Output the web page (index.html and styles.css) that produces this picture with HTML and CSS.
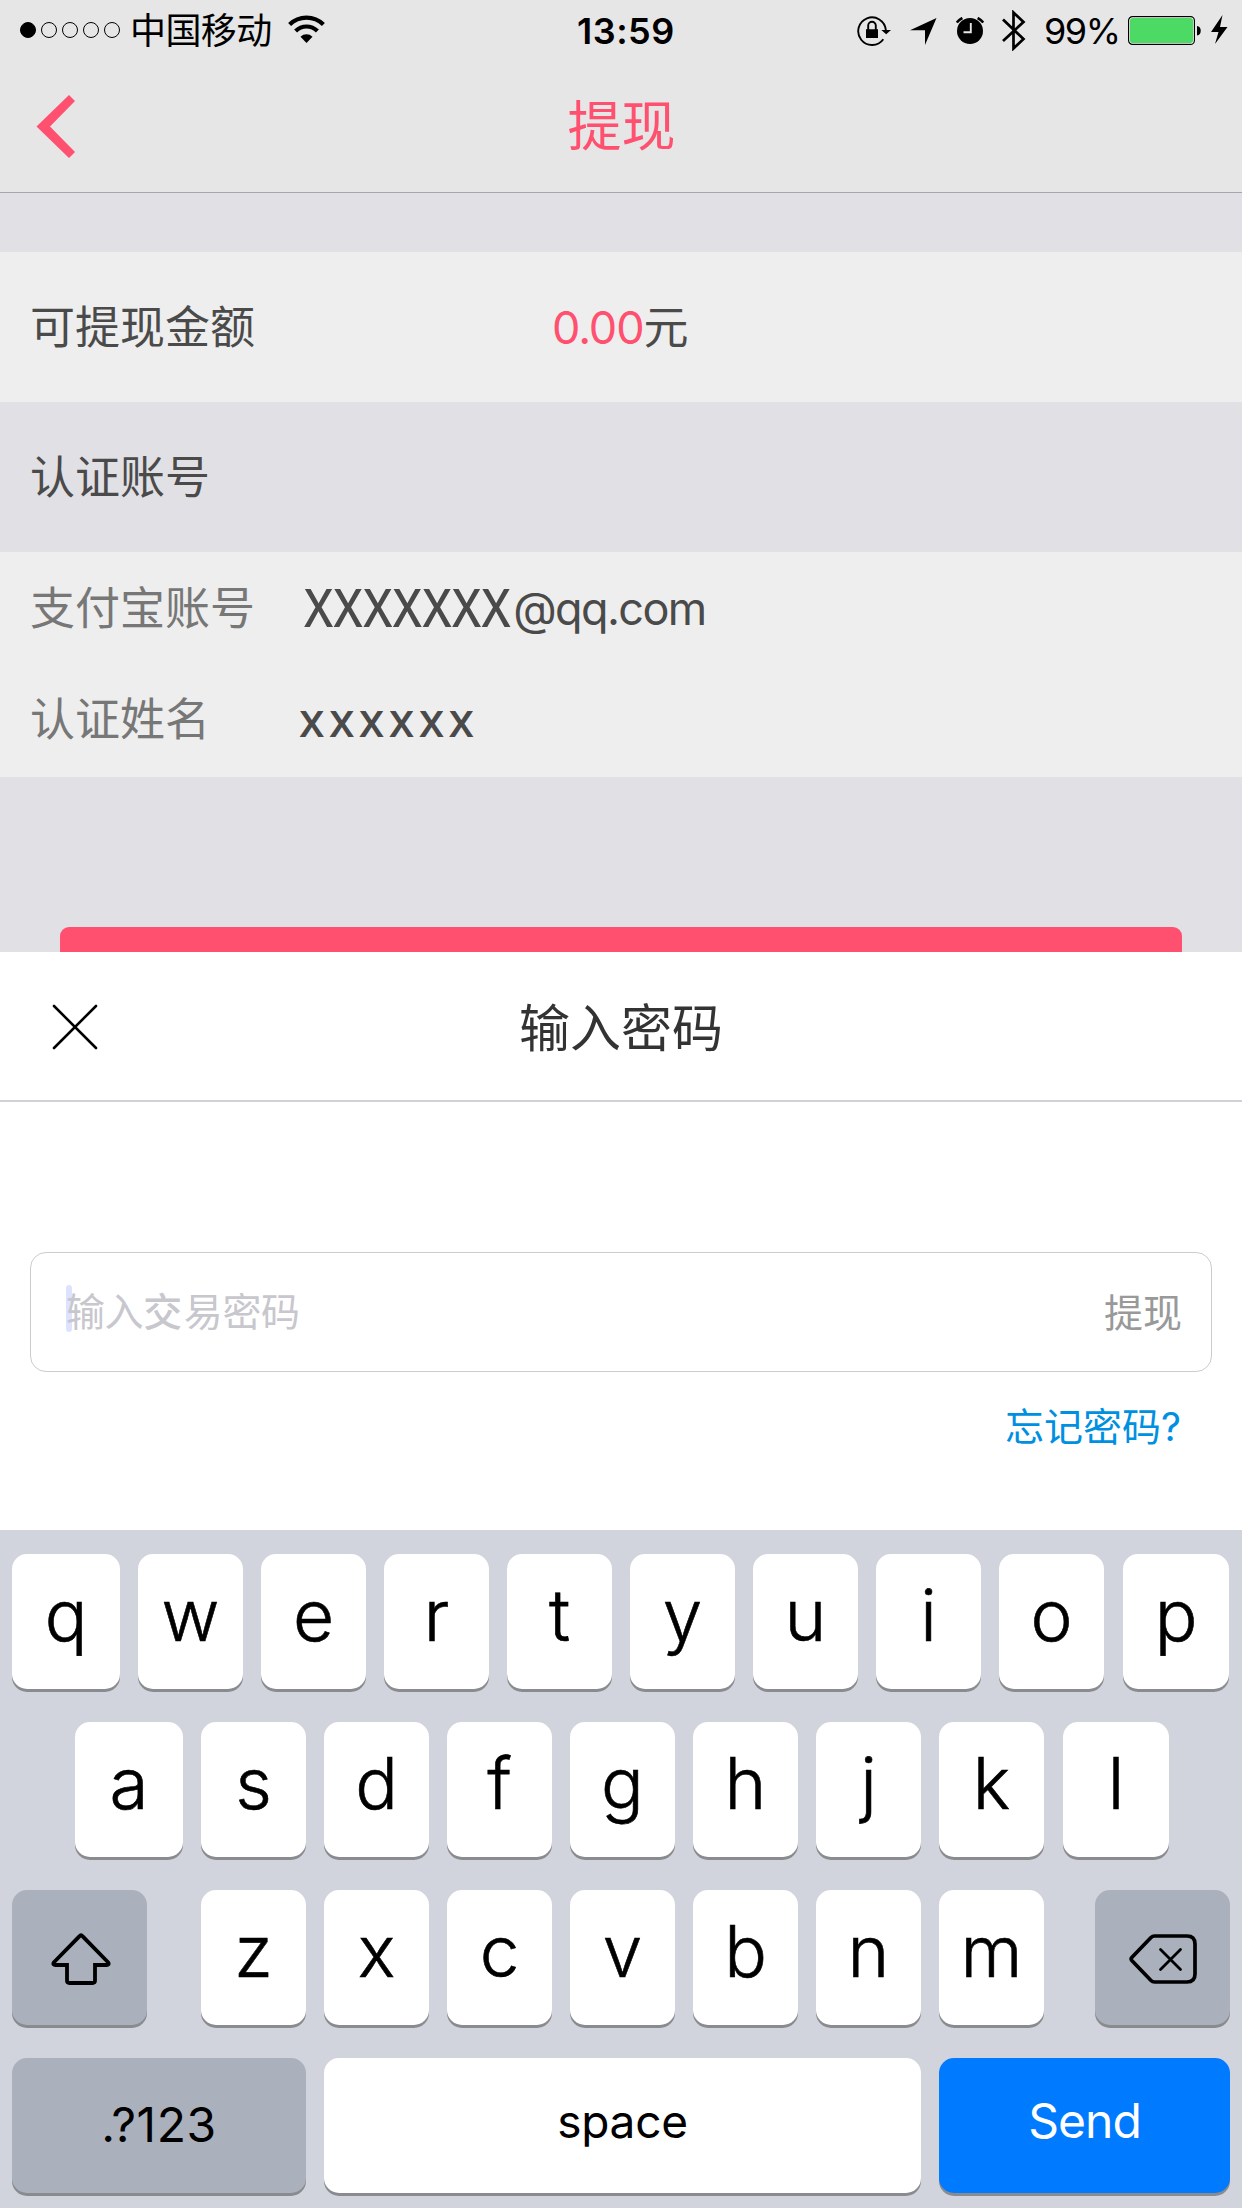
FILE: index.html
```
<!DOCTYPE html>
<html lang="zh-CN">
<head>
<meta charset="utf-8">
<title>提现</title>
<link rel="stylesheet" href="styles.css">
</head>
<body>
<div class="screen">
  <div class="status">
    <div class="signal"><i class="dot full"></i><i class="dot"></i><i class="dot"></i><i class="dot"></i><i class="dot"></i></div>
    <span class="carrier">中国移动</span>
    <svg class="wifi" width="37" height="28" viewBox="0 0 37 28"><g fill="none" stroke="#000" stroke-width="4.2"><path d="M1.6 9.6a24 24 0 0 1 33.8 0"/><path d="M7.6 16a15.4 15.4 0 0 1 21.8 0"/></g><path d="M18.5 28l-6-6.3a8.6 8.6 0 0 1 12 0z"/></svg>
    <span class="time">13:59</span>
    <svg class="lock" width="34" height="31" viewBox="0 0 34 31"><path d="M26.3 24.2A13.8 13.8 0 1 1 28.8 15" fill="none" stroke="#000" stroke-width="1.9"/><path d="M24.3 15h9.7l-4.8 4.3zM9 14.2h12V23H9z"/><path d="M11.2 15v-4.4a3.8 3.8 0 0 1 7.6 0V15" fill="none" stroke="#000" stroke-width="1.9"/></svg>
    <svg class="loc" width="27" height="27" viewBox="0 0 27 27"><path d="M26.5 0L15 27V12.3H0z"/></svg>
    <svg class="alarm" width="28" height="27" viewBox="0 0 28 27"><circle cx="14" cy="14" r="13"/><path d="M.8 5.6A14 14 0 0 1 6.4 1M27.2 5.6A14 14 0 0 0 21.600 1" fill="none" stroke="#000" stroke-width="2.6"/><path d="M14.800 6v9.200H7.500" fill="none" stroke="#e6e6e6" stroke-width="1.900"/></svg>
    <svg class="bt" width="24" height="41" viewBox="0 0 24 41"><path d="M1 9.500l20.500 19.500L11.500 38.500V2.500l10 9.500L1 31" fill="none" stroke="#000" stroke-width="2.700"/></svg>
    <span class="percent">99%</span>
    <svg class="battery" width="74" height="29" viewBox="0 0 74 29"><rect x=".6" y=".6" width="65.800" height="27.800" rx="4" fill="#fff" stroke="#000" stroke-width="1.200"/><rect x="2" y="2" width="63" height="25" rx="2.500" fill="#4cd964"/><path d="M69 10c5 0 5 9.500 0 9.500z"/></svg>
    <svg class="bolt" width="17" height="29" viewBox="0 0 17 29"><path d="M11.500 0L0 17h7.500L4 29l12.500-17H9z"/></svg>
  </div>
  <div class="nav">
    <svg width="39" height="63" viewBox="0 0 39 63"><path d="M.5 31.500L33 0l6 6-25 25.500 25 25.500-6 6z" fill="#ff5070"/></svg>
    <h1>提现</h1>
  </div>
  <div class="row amount"><span class="label">可提现金额</span><span class="value"><b>0.00</b>元</span></div>
  <div class="row section">认证账号</div>
  <div class="account">
    <div class="line"><span class="muted">支付宝账号</span><span class="mail"><span class="caps">XXXXXXX</span>@qq.com</span></div>
    <div class="line name"><span class="muted">认证姓名</span><span class="lower">xxxxxx</span></div>
  </div>
  <div class="peek"><div class="submit"></div></div>
  <div class="sheet">
    <div class="sheet-head">
      <svg width="46" height="46" viewBox="0 0 46 46"><path d="M2 2l42 42M44 2l-42 42" stroke="#000" stroke-width="2.600" stroke-linecap="round"/></svg>
      <h2>输入密码</h2>
    </div>
    <div class="field"><i class="caret"></i><span class="hint">输入<em>交</em>易密码</span><span class="act">提现</span></div>
    <div class="forgot">忘记密码?</div>
  </div>
  <div class="keyboard">
    <div class="keys first"><div class="key wide">q</div><div class="key">w</div><div class="key">e</div><div class="key">r</div><div class="key">t</div><div class="key">y</div><div class="key">u</div><div class="key">i</div><div class="key">o</div><div class="key last">p</div></div>
    <div class="keys second"><div class="key wide">a</div><div class="key">s</div><div class="key">d</div><div class="key">f</div><div class="key">g</div><div class="key">h</div><div class="key">j</div><div class="key">k</div><div class="key last">l</div></div>
    <div class="keys third"><div class="key fn shift"><svg width="60" height="52" viewBox="0 0 60 52"><path d="M28.500 3.200Q30 1 31.500 3.200L57.300 29.500Q58.500 32 55.500 32H44v15.500Q44 50 41.500 50H18.500Q16 50 16 47.500V32H4.500Q1.500 32 2.700 29.500z" fill="none" stroke="#000" stroke-width="3.800"/></svg></div><div class="key">z</div><div class="key">x</div><div class="key">c</div><div class="key">v</div><div class="key">b</div><div class="key">n</div><div class="key">m</div><div class="key fn del"><svg width="68" height="50" viewBox="0 0 68 50"><path d="M25.500 2H58Q66 2 66 10V40Q66 48 58 48H25.500Q23.500 48 22 46.500L2.800 26.500Q1.500 25 2.800 23.500L22 3.500Q23.500 2 25.500 2z" fill="none" stroke="#000" stroke-width="3.700"/><path d="M31.500 15.500l20 20M51.500 15.500l-20 20" stroke="#000" stroke-width="2.800" stroke-linecap="round"/></svg></div></div>
    <div class="keys fourth"><div class="key fn num">.?123</div><div class="key space">space</div><div class="key send">Send</div></div>
  </div>
</div>
</body>
</html>
```
FILE: styles.css
```
* { box-sizing: border-box; }
body { margin: 0; font-family: Inter, "Noto Sans CJK SC", sans-serif; }
h1, h2 { margin: 0; font-weight: 400; }
svg { display: block; flex: none; }
.screen { width: 1242px; height: 2208px; overflow: hidden; background: #e1e0e5; display: flex; flex-direction: column; }
.screen > * { flex: none; }

.status { height: 60px; background: #e6e6e6; display: flex; align-items: flex-start; white-space: nowrap; }
.signal { display: flex; gap: 5px; padding: 22px 0 0 20px; width: 130px; }
.dot { width: 16px; height: 16px; border: 1px solid #000; border-radius: 50%; }
.dot.full { background: #000; }
.carrier { width: 158px; font-size: 36px; line-height: 63px; letter-spacing: -.6px; }
.wifi { margin-top: 15px; }
.time { width: 280px; margin-left: 252px; font-size: 36px; font-weight: 600; line-height: 62px; letter-spacing: .5px; }
.lock { margin-top: 15px; }
.loc { margin: 18px 0 0 19px; }
.alarm { margin: 17px 0 0 19px; }
.bt { margin: 10px 0 0 18px; }
.percent { width: 84px; margin-left: 18px; font-size: 36px; line-height: 62px; letter-spacing: -1.5px; }
.battery { margin-top: 16px; }
.bolt { margin: 15px 0 0 9px; }

.nav { height: 133px; background: #e6e6e6; border-bottom: 1px solid #a6a6ab; display: flex; padding: 35px 0 0 36px; }
.nav h1 { width: 1092px; padding-left: 1px; text-align: center; font-size: 54px; line-height: 64px; color: #ff5070; }
.row { height: 150px; padding-left: 30px; font-size: 45px; line-height: 152px; color: #4a4a4a; display: flex; }
.amount { margin-top: 59px; background: #eee; }
.label { width: 522px; }
.value b { font-weight: 400; color: #ff5070; letter-spacing: -1.1px; }
.account { height: 225px; padding-top: 11px; background: #eee; font-size: 45px; color: #4a4a4a; }
.line { display: flex; height: 90px; line-height: 92px; padding-left: 30px; }
.line.name { margin-top: 21px; }
.muted { width: 273px; color: #777; }
.mail { letter-spacing: -1.6px; }
.caps { display: inline-block; font-family: "Noto Sans", sans-serif; font-size: 53px; font-weight: 500; line-height: 1; letter-spacing: .5px; margin-right: -20px; transform: translate(1px, 2px) scaleX(.9); transform-origin: left; }
.lower { font-family: "Noto Sans", sans-serif; font-size: 47px; font-weight: 500; line-height: 90px; letter-spacing: 4.400px; margin-left: -4px; }
.peek { height: 175px; padding: 150px 60px 0; }
.submit { height: 25px; border-radius: 9px 9px 0 0; background: #ff5070; }

.sheet { height: 578px; background: #fff; }
.sheet-head { height: 150px; border-bottom: 2px solid #d0d1d8; display: flex; padding-left: 52px; }
.sheet-head svg { margin-top: 52px; }
.sheet-head h2 { width: 1046px; text-align: center; font-size: 51px; line-height: 154px; color: #333; }
.field { height: 120px; margin: 150px 30px 0; border: 1px solid #ccc; border-radius: 16px; display: flex; align-items: flex-start; font-size: 39px; line-height: 119px; padding: 0 29px 0 35px; }
.caret { width: 6px; height: 47px; margin: 32px -6px 0 0; border-radius: 3px; background: #dde3ff; }
.hint { flex: 1; color: #c7c7cd; line-height: 117px; letter-spacing: -.4px; }
.hint em { font-style: normal; font-weight: 500; margin-right: 2px; }
.act { color: #999; }
.forgot { padding-right: 61px; text-align: right; font-size: 39px; line-height: 110px; color: #0090e2; }

.keyboard { height: 678px; background: #d1d4dc; padding-top: 24px; display: flex; flex-direction: column; gap: 33px; color: #000; }
.keys { display: flex; gap: 18px; height: 135px; padding-left: 12px; }
.key { width: 105px; height: 135px; border-radius: 15px; background: #fff; box-shadow: 0 3px 0 #898b8f; text-align: center; font-size: 71px; font-weight: 300; line-height: 123px; -webkit-text-stroke: .6px currentColor; }
.key.wide { width: 108px; }
.key.last { width: 106px; margin-left: 1px; }
.second { padding-left: 75px; }
.key.fn { background: #aab0bc; display: flex; justify-content: center; }
.key.shift { width: 135px; margin-right: 36px; padding-top: 43px; padding-left: 3px; }
.key.del { width: 135px; margin-left: 33px; padding-top: 44px; }
.fourth .key { font-weight: 400; -webkit-text-stroke: 0; }
.key.num { width: 294px; font-size: 48px; line-height: 134px; letter-spacing: .6px; }
.key.space { width: 597px; font-size: 46px; line-height: 126px; letter-spacing: -.3px; }
.key.send { width: 291px; font-size: 48px; line-height: 126px; letter-spacing: -1px; background: #007aff; color: #fff; }
```
